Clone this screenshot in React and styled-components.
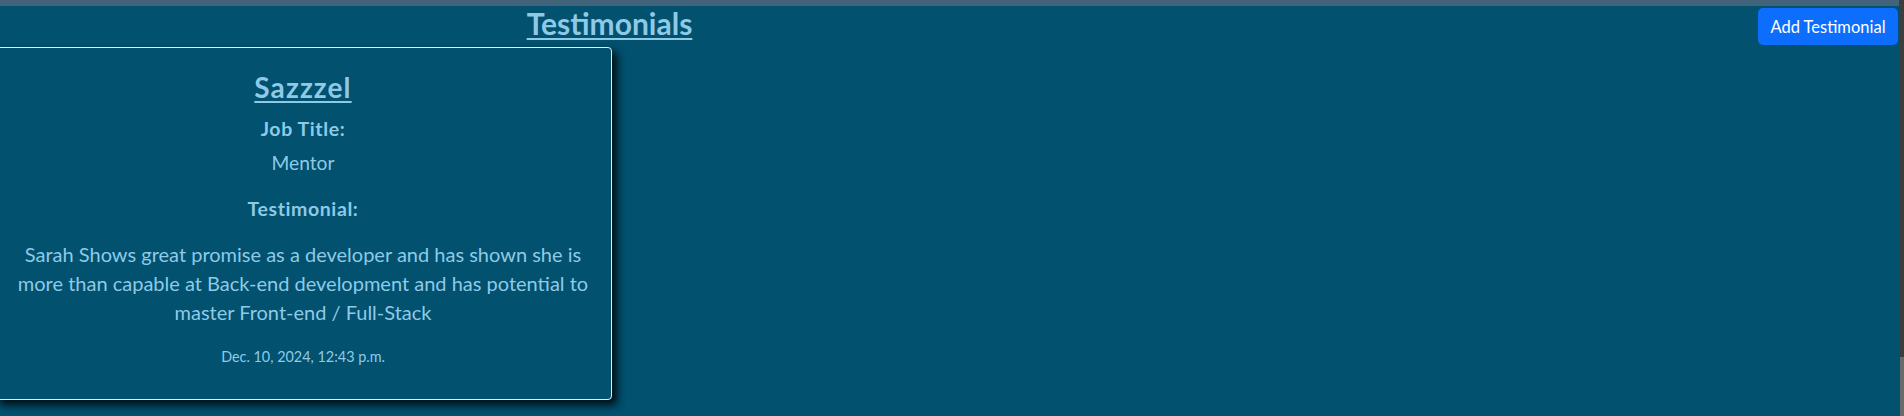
import React from "react";
import styled, { createGlobalStyle } from "styled-components";

const GlobalStyle = createGlobalStyle`
  html, body { margin: 0; padding: 0; height: 100%; overflow: hidden; }
  body { font-family: Lato, "Noto Sans", sans-serif; background: #01516f; }
  #root { height: 100%; }
`;

const Shell = styled.div`
  display: flex;
  height: 416px;
  width: 1904px;
`;

const Main = styled.main`
  flex: 1;
  display: flex;
  flex-direction: column;
  background: #01516f;
  overflow: hidden;
`;

const TopBand = styled.div`
  height: 6px;
  background: #41647a;
  flex-shrink: 0;
`;

const Header = styled.header`
  display: flex;
  align-items: flex-start;
  justify-content: space-between;
  padding-right: 1px;
`;

const HeadingCol = styled.div`
  width: 1219px;
  text-align: center;
`;

const Title = styled.h2`
  margin: 0;
  font-size: 30px;
  line-height: 34px;
  font-weight: 700;
  color: #8ecae6;
  text-decoration: underline;
  text-underline-offset: 3px;
  text-decoration-thickness: 2px;
`;

const AddButton = styled.button`
  margin-top: 2px;
  width: 140px;
  height: 37px;
  padding: 0;
  border: none;
  border-radius: 5px;
  background: #0d6efd;
  color: #ffffff;
  font-family: Lato, "Noto Sans", sans-serif;
  font-size: 16.5px;
  cursor: pointer;
`;

const CardList = styled.section`
  display: flex;
  margin-top: 2px;
  margin-left: -6px;
`;

const Card = styled.article`
  width: 618px;
  height: 353px;
  box-sizing: border-box;
  border: 1px solid #e3ecf0;
  border-radius: 4px;
  box-shadow: 5px 5px 9px rgba(0, 0, 0, 0.85);
  padding: 24px 14px 0;
  text-align: center;
  color: #8ecae6;
  display: flex;
  flex-direction: column;
  align-items: center;
`;

const Name = styled.h3`
  margin: 0;
  font-size: 28px;
  line-height: 31px;
  font-weight: 700;
  letter-spacing: 1.1px;
  text-decoration: underline;
  text-underline-offset: 3px;
  text-decoration-thickness: 2px;
`;

const Label = styled.h5`
  margin: ${(p) => p.$gap}px 0 0;
  font-size: 19.5px;
  line-height: 26px;
  font-weight: 700;
  letter-spacing: 0.6px;
`;

const Value = styled.p`
  margin: ${(p) => p.$gap}px 0 0;
  font-size: 19.2px;
  line-height: 26px;
`;

const Quote = styled.p`
  margin: 18px 0 0;
  font-size: 20px;
  line-height: 29px;
`;

const DateLine = styled.p`
  margin: 20px 0 0;
  font-size: 14.4px;
  line-height: 20px;
`;

const ScrollTrack = styled.div`
  width: 5px;
  background: #3d3d3d;
  display: flex;
  flex-direction: column;
  justify-content: flex-end;
`;

const Thumb = styled.div`
  height: 59px;
  margin-left: 1px;
  background: #6a6a6a;
`;

export default function App() {
  return (
    <>
      <GlobalStyle />
      <Shell>
        <Main>
          <TopBand />
          <Header>
            <HeadingCol>
              <Title>Testimonials</Title>
            </HeadingCol>
            <AddButton>Add Testimonial</AddButton>
          </Header>
          <CardList>
            <Card>
              <Name>Sazzzel</Name>
              <Label $gap={13}>Job Title:</Label>
              <Value $gap={8}>Mentor</Value>
              <Label $gap={20}>Testimonial:</Label>
              <Quote>
                Sarah Shows great promise as a developer and has shown she is more than
                capable at Back-end development and has potential to master Front-end /
                Full-Stack
              </Quote>
              <DateLine>Dec. 10, 2024, 12:43 p.m.</DateLine>
            </Card>
          </CardList>
        </Main>
        <ScrollTrack>
          <Thumb />
        </ScrollTrack>
      </Shell>
    </>
  );
}
